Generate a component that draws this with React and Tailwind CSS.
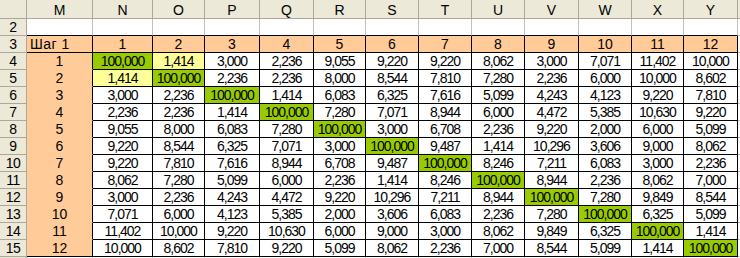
import React from 'react'

const cols = ['M', 'N', 'O', 'P', 'Q', 'R', 'S', 'T', 'U', 'V', 'W', 'X', 'Y']

const matrix = [
  ['100,000', '1,414', '3,000', '2,236', '9,055', '9,220', '9,220', '8,062', '3,000', '7,071', '11,402', '10,000'],
  ['1,414', '100,000', '2,236', '2,236', '8,000', '8,544', '7,810', '7,280', '2,236', '6,000', '10,000', '8,602'],
  ['3,000', '2,236', '100,000', '1,414', '6,083', '6,325', '7,616', '5,099', '4,243', '4,123', '9,220', '7,810'],
  ['2,236', '2,236', '1,414', '100,000', '7,280', '7,071', '8,944', '6,000', '4,472', '5,385', '10,630', '9,220'],
  ['9,055', '8,000', '6,083', '7,280', '100,000', '3,000', '6,708', '2,236', '9,220', '2,000', '6,000', '5,099'],
  ['9,220', '8,544', '6,325', '7,071', '3,000', '100,000', '9,487', '1,414', '10,296', '3,606', '9,000', '8,062'],
  ['9,220', '7,810', '7,616', '8,944', '6,708', '9,487', '100,000', '8,246', '7,211', '6,083', '3,000', '2,236'],
  ['8,062', '7,280', '5,099', '6,000', '2,236', '1,414', '8,246', '100,000', '8,944', '2,236', '8,062', '7,000'],
  ['3,000', '2,236', '4,243', '4,472', '9,220', '10,296', '7,211', '8,944', '100,000', '7,280', '9,849', '8,544'],
  ['7,071', '6,000', '4,123', '5,385', '2,000', '3,606', '6,083', '2,236', '7,280', '100,000', '6,325', '5,099'],
  ['11,402', '10,000', '9,220', '10,630', '6,000', '9,000', '3,000', '8,062', '9,849', '6,325', '100,000', '1,414'],
  ['10,000', '8,602', '7,810', '9,220', '5,099', '8,062', '2,236', '7,000', '8,544', '5,099', '1,414', '100,000'],
]

// фон ячейки данных: диагональ зелёная, пара (1,2)/(2,1) жёлтая
function cellBg(r, c) {
  if (r === c) return 'bg-[#99CC00]'
  if ((r === 0 && c === 1) || (r === 1 && c === 0)) return 'bg-[#FFFF99]'
  return 'bg-white'
}

const headCell = 'h-[19px] bg-[#ECE9D8] border-r border-b border-[#ACA899] flex items-center justify-center pt-[2px]'
const rowHead = 'h-[17px] bg-[#ECE9D8] border-r border-b border-[#ACA899] flex items-center justify-center tracking-[-0.5px]'

export default function App() {
  return (
    <div
      className="w-[740px] h-[258px] overflow-hidden bg-white text-black text-[14px] leading-none"
      style={{ fontFamily: '"Liberation Sans", Arial, sans-serif' }}
    >
      <div className="grid grid-cols-[27px_66px_60px_52px_55px_54px_52px_53px_53px_53px_54px_53px_52px_54px_2px]">
        {/* Header */}
        <div className={headCell}></div>
        {cols.map((c) => (
          <div key={c} className={headCell}>{c}</div>
        ))}
        <div className="h-[19px] bg-[#ECE9D8] border-b border-[#ACA899]"></div>

        {/* Row 2 */}
        <div className={rowHead}>2</div>
        {cols.map((c) => (
          <div key={c} className="h-[17px] bg-white border-r border-b border-r-[#C0C0C0] border-b-black"></div>
        ))}
        <div className="h-[17px] bg-white border-b border-[#C0C0C0]"></div>

        {/* Row 3 */}
        <div className={rowHead}>3</div>
        <div className="h-[17px] bg-[#FFCC99] border-r border-b border-black flex items-center pl-[3px] tracking-[0.5px]">Шаг 1</div>
        {cols.slice(1).map((c, i) => (
          <div key={c} className="h-[17px] bg-[#FFCC99] border-r border-b border-black flex items-center justify-center">
            {i + 1}
          </div>
        ))}
        <div className="h-[17px] bg-white border-b border-[#C0C0C0]"></div>

        {/* Data rows */}
        {matrix.map((row, r) => (
          <React.Fragment key={r}>
            <div className={rowHead}>{r + 4}</div>
            <div
              className={
                'h-[17px] bg-[#FFCC99] border-r border-b border-r-black flex items-center justify-center ' +
                (r === 11 ? 'border-b-black' : 'border-b-transparent')
              }
            >
              {r + 1}
            </div>
            {row.map((v, c) => (
              <div
                key={c}
                className={'h-[17px] border-r border-b border-black flex items-center justify-center tracking-[-1px] ' + cellBg(r, c)}
              >
                {v}
              </div>
            ))}
            <div className="h-[17px] bg-white border-b border-[#C0C0C0]"></div>
          </React.Fragment>
        ))}

        {/* Row 16 (cut off) */}
        <div className="h-[17px] bg-[#ECE9D8] border-r border-[#ACA899]"></div>
        {cols.map((c) => (
          <div key={c} className="h-[17px] bg-white border-r border-r-[#C0C0C0]"></div>
        ))}
        <div className="h-[17px] bg-white"></div>
      </div>
    </div>
  )
}
